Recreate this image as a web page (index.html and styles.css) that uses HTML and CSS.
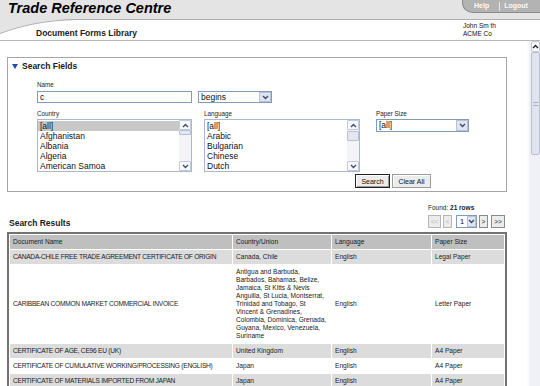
FILE: index.html
```html
<!DOCTYPE html>
<html lang="en">
<head>
<meta charset="utf-8">
<title>Trade Reference Centre</title>
<link rel="stylesheet" href="styles.css">
</head>
<body>
<div class="page">
  <header class="masthead">
    <div class="band">
      <h1 class="title">Trade Reference Centre</h1>
      <nav class="tabs"><a class="tab">Help</a><span class="tab-sep"></span><a class="tab">Logout</a></nav>
    </div>
    <div class="sub">
      <svg class="swoosh" width="80" height="16" viewBox="0 0 80 16"><path d="M0 0H80C45 0.5 22 6 0 14Z" fill="#e4e4e4"/><path d="M80 0.5C45 1 22 6.5 0 14.5" fill="none" stroke="#adadad" stroke-width="1"/></svg>
      <div class="section">Document Forms Library</div>
      <div class="user"><div>John Sm th</div><div>ACME Co</div></div>
    </div>
  </header>
  <div class="workspace">
    <main class="content">
      <section class="search-box">
        <h2 class="sf-title"><svg class="tri" width="6" height="5" viewBox="0 0 6 5"><path d="M0 0H6L3 5Z" fill="#1d4fa8"/></svg>Search Fields</h2>
        <div class="sf-body">
          <label class="lbl lbl-name">Name</label>
          <div class="name-row">
            <div class="textbox">c</div>
            <div class="select sel-begins"><span class="sel-text">begins</span><span class="drop"><svg width="7" height="5" viewBox="0 0 7 5"><path d="M1 1l2.5 2.5L6 1" fill="none" stroke="#3f4b66" stroke-width="1.4"/></svg></span></div>
          </div>
          <div class="filters">
            <div class="col col-country">
              <label class="lbl">Country</label>
              <div class="listbox">
                <div class="lb-items">
                  <div class="lb-item chosen">[all]</div>
                  <div class="lb-item">Afghanistan</div>
                  <div class="lb-item">Albania</div>
                  <div class="lb-item">Algeria</div>
                  <div class="lb-item">American Samoa</div>
                </div>
                <div class="lb-scroll">
                  <div class="lb-btn"><svg width="7" height="5" viewBox="0 0 7 5"><path d="M1 4l2.5-2.5L6 4" fill="none" stroke="#3f4b66" stroke-width="1.4"/></svg></div>
                  <div class="lb-track"><div class="lb-thumb thumb-country"></div></div>
                  <div class="lb-btn"><svg width="7" height="5" viewBox="0 0 7 5"><path d="M1 1l2.5 2.5L6 1" fill="none" stroke="#3f4b66" stroke-width="1.4"/></svg></div>
                </div>
              </div>
            </div>
            <div class="col col-language">
              <label class="lbl">Language</label>
              <div class="listbox">
                <div class="lb-items">
                  <div class="lb-item">[all]</div>
                  <div class="lb-item">Arabic</div>
                  <div class="lb-item">Bulgarian</div>
                  <div class="lb-item">Chinese</div>
                  <div class="lb-item">Dutch</div>
                </div>
                <div class="lb-scroll">
                  <div class="lb-btn"><svg width="7" height="5" viewBox="0 0 7 5"><path d="M1 4l2.5-2.5L6 4" fill="none" stroke="#3f4b66" stroke-width="1.4"/></svg></div>
                  <div class="lb-track"><div class="lb-thumb thumb-language"></div></div>
                  <div class="lb-btn"><svg width="7" height="5" viewBox="0 0 7 5"><path d="M1 1l2.5 2.5L6 1" fill="none" stroke="#3f4b66" stroke-width="1.4"/></svg></div>
                </div>
              </div>
            </div>
            <div class="col col-paper">
              <label class="lbl">Paper Size</label>
              <div class="select sel-paper"><span class="sel-text">[all]</span><span class="drop"><svg width="7" height="5" viewBox="0 0 7 5"><path d="M1 1l2.5 2.5L6 1" fill="none" stroke="#3f4b66" stroke-width="1.4"/></svg></span></div>
            </div>
          </div>
          <div class="actions">
            <button class="btn btn-default">Search</button>
            <button class="btn btn-clear">Clear All</button>
          </div>
        </div>
      </section>

      <div class="results-head">
        <h2 class="results-title">Search Results</h2>
        <div class="paging">
          <div class="found">Found: <b>21 rows</b></div>
          <div class="pager">
            <span class="pg pg-first dis">&lt;&lt;</span>
            <span class="pg pg-prev dis">&lt;</span>
            <span class="pg-select"><span class="pg-num">1</span><span class="drop"><svg width="7" height="5" viewBox="0 0 7 5"><path d="M1 1l2.5 2.5L6 1" fill="none" stroke="#3f4b66" stroke-width="1.4"/></svg></span></span>
            <span class="pg pg-next">&gt;</span>
            <span class="pg pg-last">&gt;&gt;</span>
          </div>
        </div>
      </div>

      <table class="results">
        <colgroup><col class="c-doc"><col class="c-country"><col class="c-lang"><col class="c-paper"></colgroup>
        <thead>
          <tr><th>Document Name</th><th>Country/Union</th><th>Language</th><th>Paper Size</th></tr>
        </thead>
        <tbody>
          <tr class="alt"><td class="doc">CANADA-CHILE FREE TRADE AGREEMENT CERTIFICATE OF ORIGIN</td><td>Canada, Chile</td><td>English</td><td>Legal Paper</td></tr>
          <tr><td class="doc">CARIBBEAN COMMON MARKET COMMERCIAL INVOICE</td><td>Antigua and Barbuda, Barbados, Bahamas, Belize, Jamaica, St Kitts &amp; Nevis Anguilla, St Lucia, Montserrat, Trinidad and Tobago, St Vincent &amp; Grenadines, Colombia, Dominica, Grenada, Guyana, Mexico, Venezuela, Suriname</td><td>English</td><td>Letter Paper</td></tr>
          <tr class="alt"><td class="doc">CERTIFICATE OF AGE, CE96 EU (UK)</td><td>United Kingdom</td><td>English</td><td>A4 Paper</td></tr>
          <tr><td class="doc">CERTIFICATE OF CUMULATIVE WORKING/PROCESSING (ENGLISH)</td><td>Japan</td><td>English</td><td>A4 Paper</td></tr>
          <tr class="alt"><td class="doc">CERTIFICATE OF MATERIALS IMPORTED FROM JAPAN</td><td>Japan</td><td>English</td><td>A4 Paper</td></tr>
        </tbody>
      </table>
    </main>
    <div class="vscroll">
      <div class="vs-btn"><svg width="7" height="5" viewBox="0 0 7 5"><path d="M1 4l2.5-2.5L6 4" fill="none" stroke="#222" stroke-width="1.4"/></svg></div>
      <div class="vs-thumb"><span class="grip"></span></div>
      <div class="vs-track"></div>
    </div>
  </div>
</div>
</body>
</html>
```
FILE: styles.css
```css
* { box-sizing: border-box; }
html, body { margin: 0; padding: 0; }
body {
  width: 540px;
  height: 386px;
  overflow: hidden;
  background: #fff;
  color: #111;
  font-family: "Liberation Sans", Arial, sans-serif;
}
.page { height: 386px; display: flex; flex-direction: column; }

/* masthead */
.band {
  height: 20px;
  background: #e4e4e4;
  border-bottom: 1px solid #b0b0b0;
  display: flex;
  justify-content: space-between;
  align-items: flex-start;
}
.title {
  margin: 0;
  padding-left: 8px;
  font-size: 14.5px;
  line-height: 16px;
  font-weight: bold;
  font-style: italic;
  color: #000;
}
.tabs {
  width: 78px;
  height: 13px;
  background: #b3b3b3;
  border-left: 1px solid #8c8c8c;
  border-bottom: 1px solid #8c8c8c;
  border-bottom-left-radius: 11px 10px;
  display: flex;
  align-items: center;
  padding-left: 11px;
}
.tab { color: #fafafa; font-size: 7px; font-weight: bold; line-height: 10px; }
.tab-sep { width: 1px; height: 9px; background: #e6e6e6; margin: 0 4px 0 10px; }

.sub {
  position: relative;
  height: 21px;
  border-bottom: 1px solid #b6b6b6;
  display: flex;
  justify-content: space-between;
}
.swoosh { position: absolute; left: 0; top: -1px; }
.section {
  padding: 8px 0 0 36px;
  font-size: 8.5px;
  line-height: 10px;
  font-weight: bold;
  color: #222;
}
.user {
  width: 77px;
  padding-top: 2px;
  font-size: 6.5px;
  line-height: 8px;
  color: #111;
}

/* workspace */
.workspace { flex: 1; display: flex; min-height: 0; }
.content { flex: 1; overflow: hidden; padding-top: 16px; }

.search-box {
  margin-left: 7px;
  width: 500px;
  border: 1px solid #a6a6a6;
  padding-bottom: 3px;
}
.sf-title {
  margin: 1px 0 0;
  height: 14px;
  padding-left: 4px;
  display: flex;
  align-items: center;
  gap: 4px;
  font-size: 8.5px;
  line-height: 14px;
  font-weight: bold;
  color: #1a1a1a;
}
.sf-body { padding-left: 29px; }
.lbl { display: block; font-size: 6.3px; line-height: 8px; color: #222; }
.lbl-name { margin-top: 8px; }
.name-row { display: flex; gap: 6px; margin-top: 2px; height: 12px; }
.textbox {
  width: 155px;
  border: 1px solid #7f9db9;
  font-size: 8.5px;
  line-height: 10px;
  padding-left: 2px;
}
.select {
  border: 1px solid #7f9db9;
  display: flex;
  justify-content: space-between;
  background: #fff;
}
.sel-text { font-size: 8.5px; line-height: 10px; padding-left: 2px; }
.drop {
  width: 12px;
  background: #dfe4ef;
  border: 1px solid #b7c2da;
  display: flex;
  align-items: center;
  justify-content: center;
}
.sel-begins { width: 74px; }
.filters { display: flex; margin-top: 7px; }
.col-country { width: 155px; }
.col-language { width: 156px; margin-left: 12px; }
.col-paper { width: 93px; margin-left: 16px; }
.listbox {
  margin-top: 1px;
  height: 53px;
  border: 1px solid #a7b9d2;
  display: flex;
}
.lb-items { flex: 1; padding-top: 1px; overflow: hidden; font-size: 8.5px; line-height: 10px; }
.lb-item { padding-left: 2px; white-space: nowrap; }
.lb-item.chosen { background: #c8c8c8; }
.lb-scroll { width: 12px; display: flex; flex-direction: column; background: #f3f4f8; }
.lb-btn {
  height: 10px;
  border: 1px solid #c2c9d8;
  background: #f7f8fb;
  border-radius: 1px;
  display: flex;
  align-items: center;
  justify-content: center;
}
.lb-track { flex: 1; }
.lb-thumb { border: 1px solid #b7bfd2; background: #e4e7f0; border-radius: 1px; }
.thumb-country { height: 5px; }
.thumb-language { height: 10px; margin-top: 1px; }
.sel-paper { margin-top: 1px; height: 13px; width: 93px; }

.actions { display: flex; gap: 2px; margin-top: 2px; padding-left: 318px; }
.btn {
  height: 14px;
  padding: 0;
  font-family: "Liberation Sans", Arial, sans-serif;
  font-size: 7px;
  color: #111;
  background: #ececec;
  border: 1px solid #9c9c9c;
}
.btn-default {
  width: 35px;
  border: 1px solid #222;
  box-shadow: inset 1px 1px #fff, inset -1px -1px #9a9a9a;
}
.btn-clear { width: 39px; box-shadow: inset 1px 1px #fff; }

/* results header */
.results-head {
  display: flex;
  justify-content: space-between;
  align-items: flex-end;
  margin: 12px 22px 4px 9px;
}
.results-title { margin: 0; font-size: 8.5px; line-height: 10px; font-weight: bold; color: #1a1a1a; }
.found { font-size: 6.5px; line-height: 8px; color: #222; }
.pager { display: flex; align-items: center; height: 14px; margin-top: 2px; }
.pg {
  height: 13px;
  border: 1px solid #8a8a8a;
  background: #ececec;
  font-size: 6.5px;
  display: flex;
  align-items: center;
  justify-content: center;
  color: #222;
}
.pg.dis { color: #b5b5b5; border-color: #b5b5b5; }
.pg-first { width: 13px; margin-right: 2px; }
.pg-prev { width: 9px; margin-right: 4px; }
.pg-select {
  width: 21px;
  height: 13px;
  border: 1px solid #7f9db9;
  display: flex;
  justify-content: space-between;
  margin-right: 2px;
}
.pg-num { font-size: 7.5px; line-height: 11px; padding-left: 3px; }
.pg-select .drop { width: 9px; }
.pg-next { width: 9px; margin-right: 3px; }
.pg-last { width: 14px; }

/* table */
.results {
  margin-left: 7px;
  width: 500px;
  table-layout: fixed;
  border: 2px solid #727272;
  border-spacing: 1px;
  font-size: 6.6px;
  line-height: 8px;
  color: #1a1a1a;
}
.c-doc { width: 222px; }
.c-country { width: 98px; }
.c-lang { width: 99px; }
.c-paper { width: 72px; }
.results th {
  background: #bfbfbf;
  font-weight: normal;
  text-align: left;
  padding: 3px 3px;
}
.results td { padding: 3px 3px; vertical-align: middle; }
.results tr.alt td { background: #dcdcdc; }
.results td.doc { letter-spacing: -0.24px; }

/* page scrollbar */
.vscroll {
  width: 13px;
  padding-left: 2px;
  display: flex;
  flex-direction: column;
  background: #f0f1f7;
  border-left: 2px solid #fbfbfd;
}
.vs-btn {
  height: 11px;
  border: 1px solid #c4c9d6;
  background: #f7f8fb;
  border-radius: 2px;
  display: flex;
  align-items: center;
  justify-content: center;
}
.vs-thumb {
  height: 103px;
  border: 1px solid #b9c0d3;
  background: #e1e4ee;
  border-radius: 2px;
  display: flex;
  align-items: center;
  justify-content: center;
}
.grip { width: 5px; height: 4px; border-top: 1px solid #a9b0c4; border-bottom: 1px solid #a9b0c4; }
.vs-track { flex: 1; }
```
